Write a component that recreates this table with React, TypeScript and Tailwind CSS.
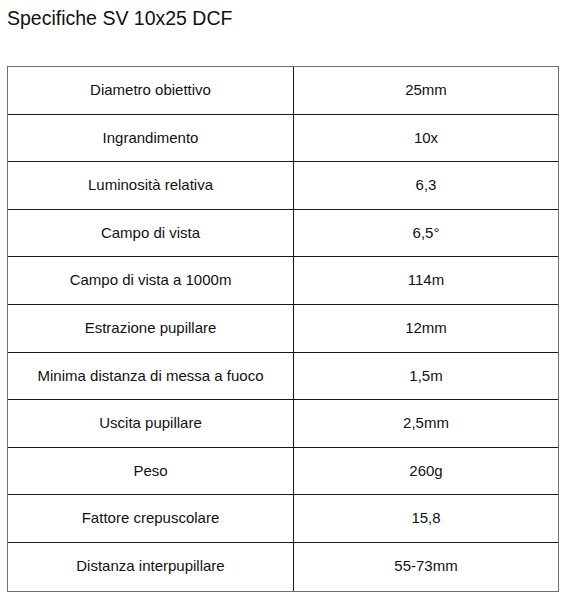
import React from 'react';

const specs: [string, string][] = [
    ['Diametro obiettivo', '25mm'],
    ['Ingrandimento', '10x'],
    ['Luminosità relativa', '6,3'],
    ['Campo di vista', '6,5°'],
    ['Campo di vista a 1000m', '114m'],
    ['Estrazione pupillare', '12mm'],
    ['Minima distanza di messa a fuoco', '1,5m'],
    ['Uscita pupillare', '2,5mm'],
    ['Peso', '260g'],
    ['Fattore crepuscolare', '15,8'],
    ['Distanza interpupillare', '55-73mm'],
];

export default function App() {
    return (
        <div className="w-[570px] h-[603px] bg-white text-[#111] font-['Liberation_Sans',Arial,sans-serif]">
            <h1 className="pt-[8px] pl-[7px] text-[19.5px] leading-[20px]">Specifiche SV 10x25 DCF</h1>

            <div className="mt-[38px] ml-[7px] w-[552px] border border-[#707070]">
                {specs.map(([label, value], i) => (
                    <div
                        key={label}
                        className={`flex h-[47.6px] text-[15px] ${i < specs.length - 1 ? 'border-b-[1.5px] border-[#1a1a1a]' : ''}`}
                    >
                        <div className="w-[286px] flex items-center justify-center border-r-[1.5px] border-[#1a1a1a]">{label}</div>
                        <div className="flex-1 flex items-center justify-center">{value}</div>
                    </div>
                ))}
            </div>
        </div>
    );
}
